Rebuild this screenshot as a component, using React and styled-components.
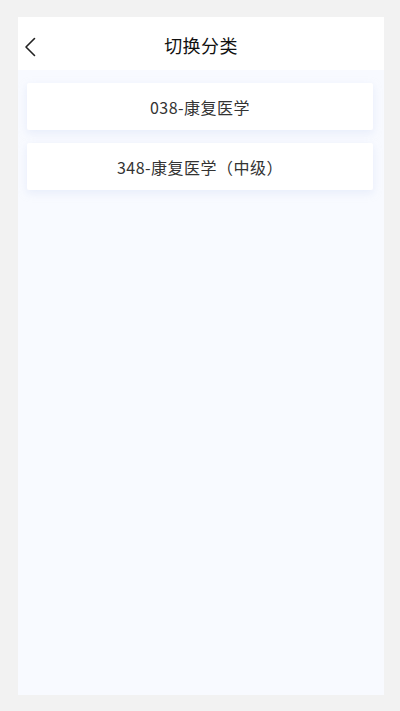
import styled, { createGlobalStyle } from "styled-components";

const GlobalStyle = createGlobalStyle`
  html, body {
    margin: 0;
    padding: 0;
    background: #f2f2f2;
    font-family: "Noto Sans CJK SC", "Noto Sans", sans-serif;
  }
`;

const categories = ["038-康复医学", "348-康复医学（中级）"];

export default function App() {
  return (
    <>
      <GlobalStyle />
      <StyledPage>
        <StyledPanel>
          <StyledHeader>
            <StyledBack aria-label="back">
              <svg width="12" height="20" viewBox="0 0 12 20">
                <path
                  d="M10.5 1.5 L2 10 L10.5 18.5"
                  fill="none"
                  stroke="#222"
                  strokeWidth="1.6"
                  strokeLinecap="round"
                  strokeLinejoin="round"
                />
              </svg>
            </StyledBack>
            <h1>切换分类</h1>
          </StyledHeader>
          <StyledList>
            {categories.map((name) => (
              <StyledCard key={name}>{name}</StyledCard>
            ))}
          </StyledList>
        </StyledPanel>
      </StyledPage>
    </>
  );
}

const StyledPage = styled.div`
  padding: 17px 16px 16px 18px;
  height: 711px;
  box-sizing: border-box;
`;

const StyledPanel = styled.section`
  width: 366px;
  height: 678px;
  background: #f8faff;
  display: flex;
  flex-direction: column;
`;

const StyledHeader = styled.header`
  position: relative;
  height: 53px;
  background: #ffffff;
  display: flex;
  align-items: center;
  justify-content: center;
  padding-top: 3px;
  box-sizing: border-box;

  h1 {
    margin: 0;
    font-size: 18px;
    font-weight: 400;
    color: #111;
    letter-spacing: 0.4px;
  }
`;

const StyledBack = styled.button`
  position: absolute;
  left: 6px;
  top: 20px;
  padding: 0;
  border: none;
  background: transparent;
  display: flex;
`;

const StyledList = styled.div`
  display: flex;
  flex-direction: column;
  gap: 13px;
  padding: 13px 11px 0 9px;
`;

const StyledCard = styled.div`
  height: 47px;
  background: #ffffff;
  border-radius: 2px;
  box-shadow: 0 3px 8px rgba(200, 212, 240, 0.35);
  display: flex;
  align-items: center;
  justify-content: center;
  font-size: 16px;
  font-weight: 400;
  color: #333;
  letter-spacing: 0.5px;
`;
